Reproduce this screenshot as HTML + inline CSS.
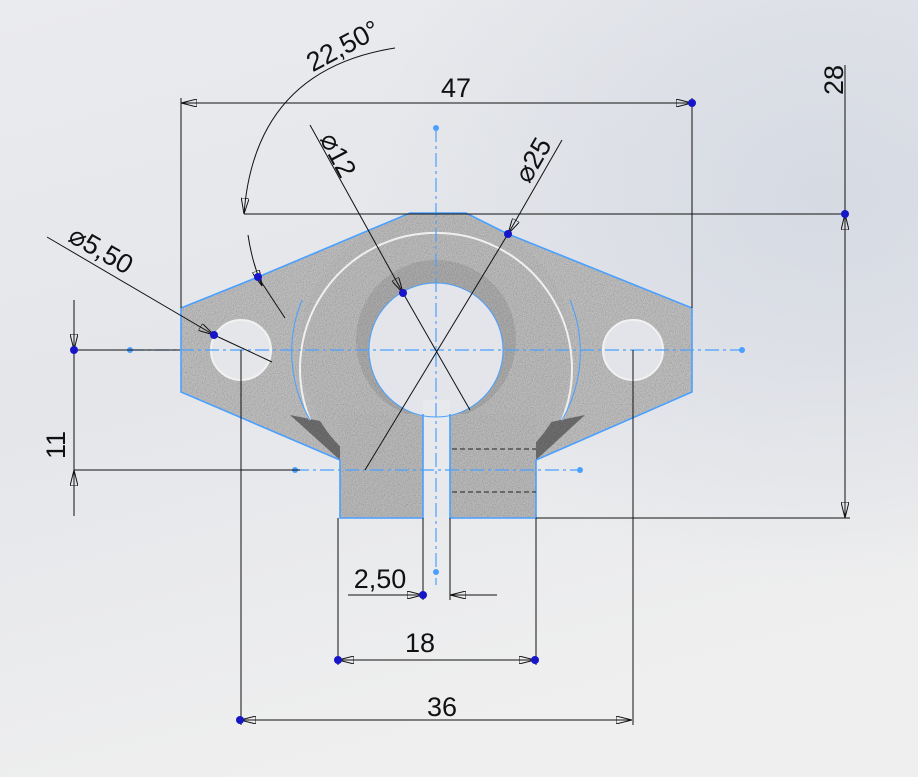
<!DOCTYPE html>
<html><head><meta charset="utf-8"><style>
html,body{margin:0;padding:0;width:918px;height:777px;overflow:hidden}
svg{display:block}
text{font-family:"Liberation Sans",sans-serif;font-size:27px;fill:#111}
</style></head><body>
<svg width="918" height="777" viewBox="0 0 918 777" xmlns="http://www.w3.org/2000/svg">
<defs>
<linearGradient id="bg" x1="0" y1="0" x2="0.3" y2="1">
<stop offset="0" stop-color="#eaebee"/><stop offset="0.5" stop-color="#e4e6ea"/><stop offset="1" stop-color="#efefef"/>
</linearGradient>
<radialGradient id="bg2" cx="0.9" cy="0.25" r="0.5">
<stop offset="0" stop-color="#d6dae3"/><stop offset="1" stop-color="#d6dae3" stop-opacity="0"/>
</radialGradient>
<filter id="noise" x="0" y="0" width="100%" height="100%">
<feTurbulence type="fractalNoise" baseFrequency="0.9" numOctaves="1" result="t"/>
<feColorMatrix type="saturate" values="0" in="t" result="g"/>
<feComposite in="g" in2="SourceGraphic" operator="in" result="n"/>
<feBlend in="SourceGraphic" in2="n" mode="multiply"/>
</filter>
<marker id="a" viewBox="0 0 16 8" refX="16" refY="4" markerWidth="16" markerHeight="8" orient="auto-start-reverse" markerUnits="userSpaceOnUse">
<path d="M0,0 L16,4 L0,8 Z" fill="none" stroke="#111" stroke-width="1"/>
</marker>
</defs>
<rect width="918" height="777" fill="url(#bg)"/>
<rect width="918" height="777" fill="url(#bg2)"/>

<!-- part -->
<g filter="url(#noise)">
<path d="M181,308 L258,277 L410,213 L466,213 L508,234 L692,308 L692,392 L536,460 L536,518 L450,518 L450,414 L423,414 L423,518 L340,518 L340,460 L181,392 Z" fill="#cdcdcd"/>
<path d="M290,415 L340,460 L340,425 Z M536,425 L536,460 L585,415 Z" fill="#777"/>
<circle cx="436" cy="350" r="136" fill="#cacaca"/>
<circle cx="436" cy="340" r="80" fill="#b8b8b8"/>
<path d="M340,420 L340,518 L423,518 L423,414 L340,414 Z M450,414 L536,414 L536,518 L450,518 Z" fill="#c8c8c8"/>
</g>
<path d="M310,420 A136,136 0 1 1 562,420" fill="none" stroke="#f0f0f0" stroke-width="2"/>
<circle cx="436" cy="350" r="67" fill="#e3e5ea"/>
<rect x="423" y="400" width="27" height="118" fill="#e8e9ec"/>
<circle cx="241" cy="350" r="30" fill="#e4e6ea" stroke="#f2f2f2" stroke-width="2"/>
<circle cx="633" cy="350" r="30" fill="#e2e4e9" stroke="#f2f2f2" stroke-width="2"/>

<!-- blue outline -->
<g fill="none" stroke="#4aa0ff" stroke-width="1.6">
<path d="M181,308 L258,277 L410,213 L466,213 L508,234 L692,308 L692,392 L536,460 L536,518 L450,518 L450,414 M423,414 L423,518 L340,518 L340,460 L181,392 L181,308"/>
<circle cx="436" cy="350" r="67" stroke-width="1"/>
<path d="M310,420 A136,136 0 0 1 302,300 M570,300 A136,136 0 0 1 562,420" stroke-width="1"/>
</g>
<g stroke="#4aa0ff" stroke-width="1.2" stroke-dasharray="14,4,3,4" fill="none">
<path d="M130,350 L742,350"/>
<path d="M436,128 L436,585"/>
<path d="M295,470 L580,470"/>
</g>
<g fill="#4aa0ff"><circle cx="436" cy="128" r="3"/><circle cx="130" cy="350" r="3"/><circle cx="742" cy="350" r="3"/><circle cx="295" cy="470" r="3"/><circle cx="580" cy="470" r="3"/><circle cx="436" cy="572" r="3"/></g>
<path d="M452,449 L536,449 M452,492 L536,492" stroke="#222" stroke-dasharray="5,3" fill="none"/>

<!-- dimensions -->
<g stroke="#111" stroke-width="1" fill="none">
<path d="M181,98 L181,308 M692,98 L692,308"/>
<path d="M181,103 L692,103" marker-start="url(#a)" marker-end="url(#a)"/>
<path d="M244,214 L845,214 M536,518 L850,518"/>
<path d="M845,65 L845,214"/>
<path d="M845,214 L845,518" marker-start="url(#a)" marker-end="url(#a)"/>
<path d="M395,48 Q255,70 244,214" marker-end="url(#a)"/>
<path d="M248,235 Q252,262 262,286" marker-end="url(#a)"/>
<path d="M258,277 L285,318"/>
<path d="M310,125 L403,293" marker-end="url(#a)"/>
<path d="M403,293 L470,410"/>
<path d="M562,140 L508,234" marker-end="url(#a)"/>
<path d="M508,234 L365,470"/>
<path d="M47,237 L214,335" marker-end="url(#a)"/>
<path d="M214,335 L272,362"/>
<path d="M74,300 L74,350" marker-end="url(#a)"/>
<path d="M74,470 L74,516" marker-start="url(#a)"/>
<path d="M74,350 L74,470 M74,350 L180,350 M74,470 L300,470"/>
<path d="M423,518 L423,600 M450,518 L450,600"/>
<path d="M348,595 L423,595" marker-end="url(#a)"/>
<path d="M450,595 L497,595" marker-start="url(#a)"/>
<path d="M338,518 L338,665 M536,518 L536,665"/>
<path d="M338,660 L535,660" marker-start="url(#a)" marker-end="url(#a)"/>
<path d="M241,350 L241,725 M633,350 L633,725"/>
<path d="M240,720 L632,720" marker-start="url(#a)" marker-end="url(#a)"/>
</g>
<g fill="#1616c8">
<circle cx="692" cy="103" r="4"/><circle cx="845" cy="214" r="4"/><circle cx="258" cy="277" r="4"/>
<circle cx="403" cy="293" r="4"/><circle cx="508" cy="234" r="4"/><circle cx="214" cy="335" r="4"/>
<circle cx="74" cy="350" r="4"/><circle cx="423" cy="595" r="4"/><circle cx="338" cy="660" r="4"/>
<circle cx="535" cy="660" r="4"/><circle cx="240" cy="720" r="4"/>
</g>

<!-- text -->
<text x="456" y="97" text-anchor="middle">47</text>
<text transform="translate(834,80) rotate(-90)" text-anchor="middle" dominant-baseline="central">28</text>
<text transform="translate(343,46) rotate(-28)" text-anchor="middle" dominant-baseline="central">22,50°</text>
<text transform="translate(338,155) rotate(62)" text-anchor="middle" dominant-baseline="central">⌀12</text>
<text transform="translate(533,160) rotate(-60)" text-anchor="middle" dominant-baseline="central">⌀25</text>
<text transform="translate(101,250) rotate(30)" text-anchor="middle" dominant-baseline="central">⌀5,50</text>
<text transform="translate(56,445) rotate(-90)" text-anchor="middle" dominant-baseline="central">11</text>
<text x="380" y="588" text-anchor="middle">2,50</text>
<text x="420" y="652" text-anchor="middle">18</text>
<text x="442" y="716" text-anchor="middle">36</text>
</svg>
</body></html>
